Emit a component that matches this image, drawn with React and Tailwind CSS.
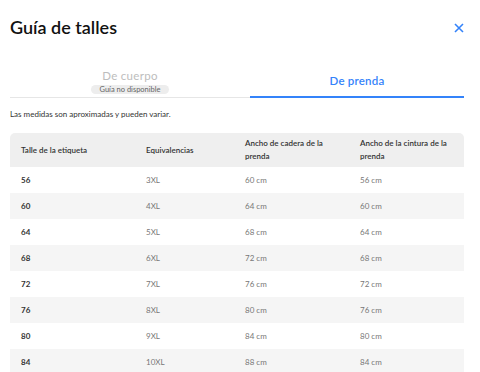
import React, { useState } from 'react';

const rows = [
  ['56', '3XL', '60 cm', '56 cm'],
  ['60', '4XL', '64 cm', '60 cm'],
  ['64', '5XL', '68 cm', '64 cm'],
  ['68', '6XL', '72 cm', '68 cm'],
  ['72', '7XL', '76 cm', '72 cm'],
  ['76', '8XL', '80 cm', '76 cm'],
  ['80', '9XL', '84 cm', '80 cm'],
  ['84', '10XL', '88 cm', '84 cm'],
];

const headers = [
  'Talle de la etiqueta',
  'Equivalencias',
  'Ancho de cadera de la prenda',
  'Ancho de la cintura de la prenda',
];

const App = () => {
  const [tab] = useState('prenda');

  return (
    <div className="w-[480px] h-[372px] overflow-hidden bg-white pl-[10px] pr-[16px] font-['Lato','Liberation_Sans',sans-serif]">
      <div className="flex items-center justify-between pt-[13px] h-[41px]">
        <h2 className="text-[18px] leading-[24px] font-semibold text-[#111]">Guía de talles</h2>
        <button className="text-[#3483fa] mt-[1px]" aria-label="Cerrar">
          <svg width="10" height="10" viewBox="0 0 10 10" fill="none" stroke="currentColor" strokeWidth="1.6">
            <path d="M1 1 L9 9 M9 1 L1 9" />
          </svg>
        </button>
      </div>

      <div className="mt-[24px] flex border-b border-[#e6e6e6]">
        <div className="w-[240px] flex flex-col items-center pt-[4px] pb-[3px]">
          <span className="text-[11.5px] leading-[14px] tracking-[0.3px] text-[#bdbdbd]">De cuerpo</span>
          <span className="mt-[2px] rounded-full bg-[#ededed] px-[8px] text-[7.5px] leading-[9px] text-[#666]">
            Guía no disponible
          </span>
        </div>
        <div
          className={`flex-1 flex items-center justify-center border-b-2 -mb-px ${
            tab === 'prenda' ? 'border-[#3483fa]' : 'border-transparent'
          }`}
        >
          <span className="text-[11.5px] leading-[14px] font-semibold tracking-[0.2px] text-[#3483fa] pt-[1px]">De prenda</span>
        </div>
      </div>

      <p className="mt-[11px] text-[8px] leading-[10px] text-[#333]">Las medidas son aproximadas y pueden variar.</p>

      <div className="mt-[14px] rounded-t-[5px] overflow-hidden">
        <div className="grid grid-cols-[125px_99px_115px_115px] bg-[#efefef] h-[34px] items-center">
          {headers.map((h) => (
            <div key={h} className="px-[11px] text-[8px] leading-[13px] font-semibold text-[#333]">
              {h}
            </div>
          ))}
        </div>
        {rows.map((r, i) => (
          <div
            key={r[0]}
            className={`grid grid-cols-[125px_99px_115px_115px] h-[26px] items-center text-[8px] ${
              i % 2 === 1 ? 'bg-[#f5f5f5]' : 'bg-white'
            }`}
          >
            <div className="px-[11px] font-bold text-[#333]">{r[0]}</div>
            <div className="px-[11px] text-[#777]">{r[1]}</div>
            <div className="px-[11px] text-[#777]">{r[2]}</div>
            <div className="px-[11px] text-[#777]">{r[3]}</div>
          </div>
        ))}
      </div>
    </div>
  );
};

export default App;
